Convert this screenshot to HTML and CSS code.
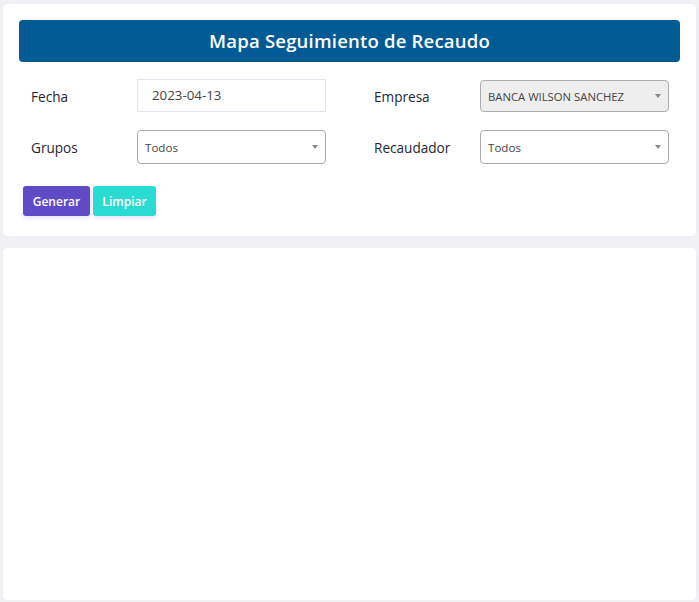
FILE: index.html
```html
<!DOCTYPE html>
<html lang="es">
<head>
<meta charset="utf-8">
<title>Mapa Seguimiento de Recaudo</title>
<link rel="stylesheet" href="styles.css">
</head>
<body>
<div class="page">
  <section class="card filters">
    <h1 class="title">Mapa Seguimiento de Recaudo</h1>
    <div class="form-grid">
      <label class="label">Fecha</label>
      <div class="input date">2023-04-13</div>
      <span class="spacer"></span>
      <label class="label">Empresa</label>
      <div class="select disabled"><span class="select-text upper">BANCA WILSON SANCHEZ</span><span class="arrow"></span></div>

      <label class="label">Grupos</label>
      <div class="select"><span class="select-text">Todos</span><span class="arrow"></span></div>
      <span class="spacer"></span>
      <label class="label">Recaudador</label>
      <div class="select"><span class="select-text">Todos</span><span class="arrow"></span></div>
    </div>
    <div class="actions">
      <button class="btn btn-primary">Generar</button>
      <button class="btn btn-info">Limpiar</button>
    </div>
  </section>
  <section class="card map"></section>
</div>
</body>
</html>
```
FILE: styles.css
```css
* { box-sizing: border-box; }
html, body { margin: 0; padding: 0; }
body {
  background: #f0f0f5;
  font-family: "Open Sans", "Noto Sans", sans-serif;
  color: #2a2a3a;
  width: 699px;
  height: 602px;
  overflow: hidden;
}
.page {
  padding: 4px 3px 2px 3px;
  display: flex;
  flex-direction: column;
  gap: 12px;
}
.card {
  background: #fff;
  border-radius: 4px;
  box-shadow: 0 0 2px rgba(40, 40, 80, 0.06);
}
.filters {
  height: 232px;
  padding: 16px;
}
.title {
  margin: 0;
  height: 42px;
  background: #035b96;
  border-radius: 4px;
  color: #fff;
  font-family: "Open Sans", sans-serif;
  font-weight: 600;
  font-size: 18.5px;
  line-height: 42px;
  text-align: center;
  letter-spacing: 0.2px;
}
.form-grid {
  display: grid;
  grid-template-columns: 106px 189px 48px 106px 189px;
  grid-template-rows: 33px 34px;
  row-gap: 18px;
  padding: 0 12px;
  margin-top: 17px;
  align-items: center;
}
.label {
  font-size: 13.6px;
  color: #262636;
  padding-top: 1px;
}
.input {
  height: 33px;
  border: 1px solid #e4e4ee;
  font-size: 13.3px;
  color: #444;
  padding-left: 14px;
  line-height: 31px;
}
.select {
  height: 34px;
  border: 1px solid #aaa;
  border-radius: 4px;
  background: #fff;
  display: flex;
  align-items: center;
  padding: 0 7px;
  position: relative;
}
.select.disabled {
  background: #eee;
  height: 32px;
}
.select-text {
  font-size: 11.6px;
  color: #444;
  flex: 1;
  padding-top: 1px;
}
.select-text.upper {
  font-size: 11.3px;
}
.arrow {
  width: 0;
  height: 0;
  border-left: 3.5px solid transparent;
  border-right: 3.5px solid transparent;
  border-top: 4px solid #888;
  margin-right: 0;
}
.actions {
  display: flex;
  gap: 3px;
  margin-top: 22px;
  padding-left: 4px;
}
.btn {
  height: 30px;
  border: none;
  border-radius: 3px;
  color: #fff;
  font-family: "Open Sans", sans-serif;
  font-weight: 600;
  font-size: 12px;
  padding: 0;
  box-shadow: 0 2px 4px rgba(90, 70, 200, 0.15);
}
.btn-primary { background: #5f4bc6; width: 67px; }
.btn-info { background: #29dbd1; width: 63px; }
.map {
  height: 352px;
}
```
